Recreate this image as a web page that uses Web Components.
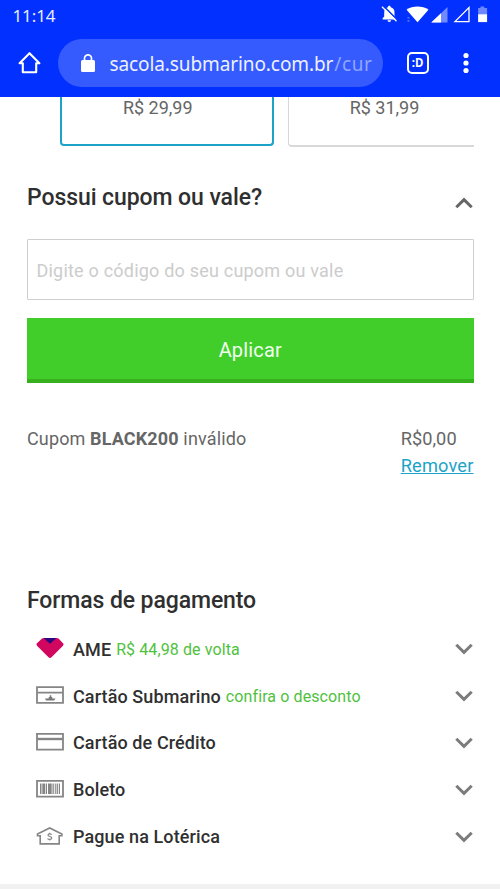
<!DOCTYPE html>
<html lang="pt-BR">
<head>
<meta charset="utf-8">
<title>Sacola</title>
<style>
html,body{margin:0;background:#fff}
body{font-family:Roboto,"Liberation Sans",sans-serif;color:#333;width:500px;height:889px;overflow:hidden}
</style>
</head>
<body>
<cart-page></cart-page>
<script>
const define=(name,html)=>customElements.define(name,class extends HTMLElement{
  constructor(){super();this.attachShadow({mode:'open'}).innerHTML=html;}
});

define('status-bar',`<style>
:host{display:flex;height:30px;justify-content:space-between;padding:0 11px 0 12.500px;box-sizing:border-box;font:17px/31px "Noto Sans",sans-serif;color:#e6ecff}
span{letter-spacing:-.1px}
svg{display:block}
</style><span>11:14</span>
<svg width="109" height="30" viewBox="380 0 109 30">
<path fill="#fff" d="M382.600 19.600v-1.400l1.600-1.600v-4.100c0-2.700 1.300-4.600 3.700-5.200 0-2 2.800-2 2.800 0 2.500.6 3.800 2.500 3.800 5.200v4.100l1.700 1.600v1.400zM387.500 20.300h3.600a1.800 1.800 0 0 1-3.600 0z"/>
<path stroke="#0535ff" stroke-width="1.600" d="M383.500 6 397.700 20.200"/><path stroke="#fff" stroke-width="1.300" d="M382 6.700 396.500 21.200"/>
<path fill="#fff" d="M417.500 22.300 406.500 9.700c6.100-4.300 15.900-4.300 22 0z"/>
<path fill="#4d70ff" d="M407.500 17h2v1.500h-2zM407.500 20h2v1.700h-2z"/>
<path fill="#708aff" d="M447.500 7v15.500h-16z"/><path fill="#fff" d="M441 13.200v9.300h-9.800z"/>
<path fill="none" stroke="#fff" stroke-width="1.300" d="M469 7.600v14h-14z"/>
<path fill="#6d88ff" d="M480.500 6.500h3.800v1.400h2.800v6.300h-9V7.900h2.400z"/><path fill="#fff" d="M478.100 14.200h9v7.900h-9z"/>
</svg>`);

define('address-pill',`<style>
:host{display:flex;box-sizing:border-box;width:325px;height:48px;border-radius:24px;background:#355bff;align-items:center;padding:0 0 0 23px;font:19px/48px "Noto Sans",sans-serif;color:#edf1ff;white-space:nowrap}
svg{margin-right:14.500px;flex:none}
.url{letter-spacing:-.1px;padding-top:2px}
::slotted(i){font-style:normal;color:#91a6ff;letter-spacing:.6px;margin-left:1px}
</style><svg width="14" height="18" viewBox="0 0 14 18"><rect y="6" width="14" height="12" rx="1.500" fill="#fff"/><path d="M3.500 7V4.300a3.500 3.500 0 0 1 7 0V7" fill="none" stroke="#fff" stroke-width="1.700"/></svg><span class="url"><slot></slot></span>`);

define('browser-bar',`<style>
:host{display:block;background:#0230ff;height:97px}
.tools{display:flex;padding:9px 0 0 18px;align-items:center}
svg{display:block;flex:none}
.home{margin-right:17px}
.tab{box-sizing:border-box;width:22px;height:22px;border:2px solid #fff;border-radius:5px;margin:0 34.500px 0 23.500px;color:#fff;font:700 11.500px/17px "Noto Sans",sans-serif;text-align:center}
</style><status-bar></status-bar><div class="tools">
<svg class="home" width="23" height="24" viewBox="0 0 23 24"><path d="M1.600 12.300 11.500 2.200 21.400 12.300H18.200V21.300H4.800V12.300z" fill="none" stroke="#fff" stroke-width="2.100" stroke-linejoin="round"/></svg>
<address-pill>sacola.submarino.com.br<i>/cur</i></address-pill>
<div class="tab">:D</div>
<svg width="6" height="22" viewBox="0 0 6 22" fill="#fff"><circle cx="3" cy="3.500" r="2.600"/><circle cx="3" cy="11" r="2.600"/><circle cx="3" cy="18.500" r="2.600"/></svg>
</div>`);

define('price-card',`<style>
:host{display:block;box-sizing:border-box;height:49px;flex:none;border:1.500px solid #d8d8d8;border-width:0 1px 2px;border-radius:0 0 4px 4px;font-size:18px;line-height:21px;color:#666;text-align:center}
:host([selected]){border:2px solid #1ba4c8;border-top:0;padding-right:18px}
</style><slot></slot>`);

define('nav-chevron',`<style>:host{display:block;width:20px;height:14px}:host([up]){transform:rotate(180deg)}svg{display:block}</style>
<svg width="20" height="14" viewBox="0 0 20 14"><path d="M2.300 2.800 10 10.300 17.700 2.800" fill="none" stroke="var(--chev,#7c7c7c)" stroke-width="3"/></svg>`);

define('coupon-form',`<style>
:host{display:block}
.head{display:flex;justify-content:space-between;height:30px;color:#2f2f2f;font:500 23px/32px Roboto,sans-serif;letter-spacing:-.08px}
nav-chevron{margin-top:14px;margin-right:-.500px;--chev:#666}
.field{box-sizing:border-box;height:61px;margin-top:27px;border:1.500px solid #cfcfcf;border-radius:1px;padding-left:8.500px;font-size:18px;line-height:61px;color:#ccc;letter-spacing:.21px}
.apply{box-sizing:border-box;height:64.500px;margin-top:18px;border-bottom:4px solid #37b01d;background:#41ce2a;color:#f1fff0;font:20px/60px Roboto,sans-serif;padding:2px 0 0;letter-spacing:.15px;text-align:center}
.result{display:flex;justify-content:space-between;margin-top:42px;font-size:18px;line-height:27px;color:#666;letter-spacing:.14px}
.result div{letter-spacing:.05px;font-size:18.200px}
b{font-weight:700}
a{display:block;color:#1ba4c8;text-decoration:underline;letter-spacing:.18px}
</style>
<div class="head"><span>Possui cupom ou vale?</span><nav-chevron up></nav-chevron></div>
<div class="field">Digite o código do seu cupom ou vale</div>
<div class="apply">Aplicar</div>
<div class="result"><span>Cupom <b>BLACK200</b> inválido</span><div>R$0,00<a>Remover</a></div></div>`);

define('pay-option',`<style>
:host{display:flex;height:46.800px;align-items:center;padding:0 0 0 9px;font-size:18px;font-weight:500;color:#303030;white-space:nowrap;letter-spacing:.1px}
.i{width:28px;height:24px;margin-right:9px}
::slotted(svg){display:block}
em{font-style:normal;font-weight:400;font-size:16px;color:#4fc13d;margin-left:5px}
nav-chevron{margin-left:auto;margin-right:-.500px}
</style><span class="i"><slot name="icon"></slot></span><slot></slot><em><slot name="note"></slot></em><nav-chevron></nav-chevron>`);

define('cart-page',`<style>
:host{display:block;height:889px}
main{padding:0 26.500px 0 27px;height:787px;box-sizing:border-box}
.cards{display:flex;gap:14.500px;margin-left:33px;overflow:hidden;height:50px}
coupon-form{margin-top:35px}
h2{margin:108.500px 0 11px;font:500 23px/28px Roboto,sans-serif;color:#2f2f2f;letter-spacing:-.1px}
footer{height:5px;background:#f1f1f1}
svg{fill:none;stroke:#858585;stroke-width:1.800}
</style><browser-bar></browser-bar><main>
<div class="cards"><price-card selected style="width:213.500px">R$ 29,99</price-card><price-card style="width:193px;height:50px">R$ 31,99</price-card></div>
<coupon-form></coupon-form>
<h2>Formas de pagamento</h2>
<pay-option><svg slot="icon" width="28" height="24" viewBox="0 0 28 24"><path fill="#d1065e" stroke="none" d="M6 1.500Q7 1 8 1H20.500Q21.500 1 22.500 1.600L27 6.200Q28 7.500 27 8.800L15.500 20.300Q14 21.700 12.500 20.300L1 8.800Q0 7.500 1 6.200z"/><path fill="#2b087f" stroke="none" d="M7.500 1H20.500L14 6.700z"/></svg>AME<span slot="note">R$ 44,98 de volta</span></pay-option>
<pay-option><svg slot="icon" width="28" height="24" viewBox="0 0 28 24"><path d="M1 3.200H27V18.900H1zM1 8.700H27"/><path stroke="none" fill="#777" d="M9 14.500h3.700v-1.500h1V11.200h1.600v1.800h1v1.500H19.500l-1.300 2.100H10z"/></svg>Cartão Submarino<span slot="note">confira o desconto</span></pay-option>
<pay-option><svg slot="icon" width="28" height="24" viewBox="0 0 28 24"><path d="M1 2.900H27V18.700H1z"/><path d="M1 8H27" stroke-width="2.400"/></svg>Cartão de Crédito</pay-option>
<pay-option><svg slot="icon" width="28" height="24" viewBox="0 0 28 24"><path d="M1 2.900H27V18.700H1z"/><path fill="#858585" stroke="none" d="M4 5.500h1.500v10.500H4zM6.300 5.500h3v10.500h-3zM10 5.500h1v10.500h-1zM12 5.500h3.700v10.500H12zM16.500 5.500h1.300v10.500h-1.300zM18.800 5.500h1v10.500h-1zM20.600 5.500h1.300v10.500h-1.300zM22.800 5.500h1.200v10.500h-1.200z"/></svg>Boleto</pay-option>
<pay-option><svg slot="icon" width="28" height="24" viewBox="0 0 28 24"><path d="M1.500 10.700V9L13.700 3 25.900 9V10.700H23.200V18.900H4.200V10.700z" stroke-width="1.600"/><path d="M15.600 9.700C15 8.600 12 8.600 12 10.200S15.700 11.300 15.700 13 12.300 15 11.600 13.400M13.700 7.800v1M13.700 14.500v1" stroke-width="1.200"/></svg>Pague na Lotérica</pay-option>
</main><footer></footer>`);
</script>
</body>
</html>
